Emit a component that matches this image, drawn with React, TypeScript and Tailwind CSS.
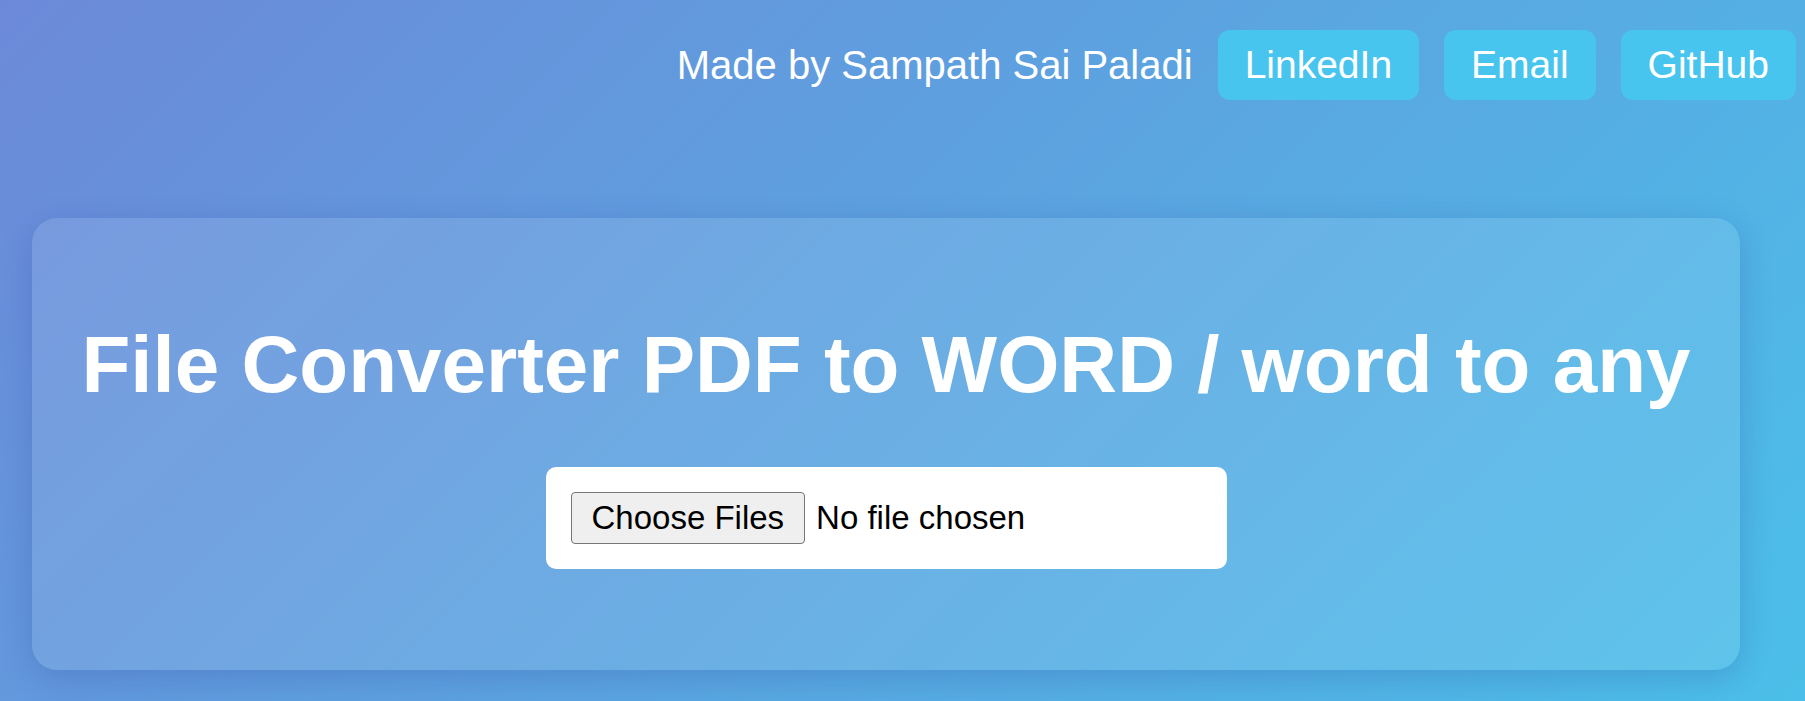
export default function App() {
  return (
    <div className="min-h-screen w-full bg-[linear-gradient(135deg,#6c89d8,#4bbfe9)] font-['Liberation_Sans',Arial,sans-serif] text-white">
      <header className="flex items-center justify-end gap-[25px] pt-[30px] pr-[9px]">
        <span className="text-[40px]">Made by Sampath Sai Paladi</span>
        {["LinkedIn", "Email", "GitHub"].map((label) => (
          <a
            key={label}
            href="#"
            className="flex h-[70px] items-center rounded-[12px] bg-[#48c5ef] px-[27px] text-[39px] text-white"
          >
            {label}
          </a>
        ))}
      </header>

      <main className="ml-[32px] mt-[118px] flex w-[1708px] flex-col items-center rounded-[25px] bg-white/10 pt-[101px] pb-[101px] shadow-[0_8px_32px_0_rgba(31,38,135,0.2)]">
        <h1 className="text-[80px] font-bold leading-[92px]">File Converter PDF to WORD / word to any</h1>
        <div className="mt-[56px] flex h-[102px] w-[681px] items-center rounded-[10px] bg-white px-[25px]">
          <input
            type="file"
            multiple
            className="h-[52px] w-full text-[33px] text-black file:mr-[11px] file:h-[52px] file:rounded-[4px] file:border file:border-solid file:border-[#767676] file:bg-[#efefef] file:px-[20px] file:text-[33px] file:text-black"
          />
        </div>
      </main>
    </div>
  );
}
